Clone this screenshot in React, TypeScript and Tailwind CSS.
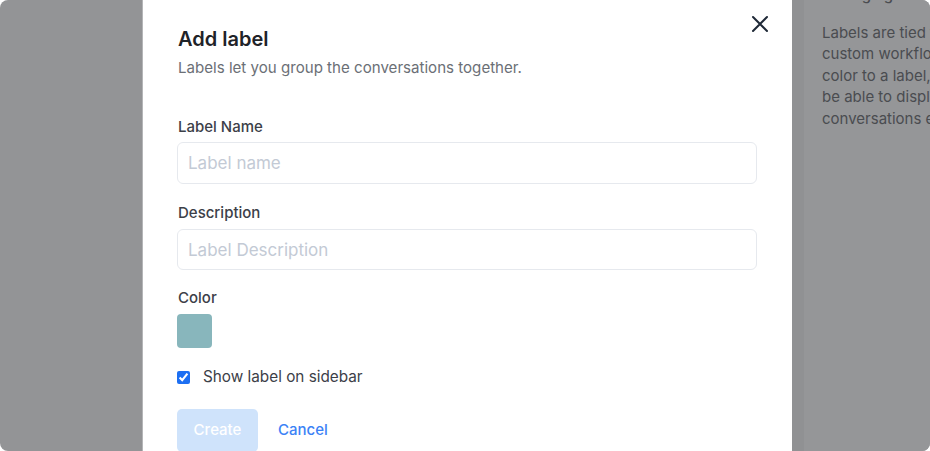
import { useState } from 'react';

const font = { fontFamily: 'Inter, "Noto Sans", sans-serif' };

const CloseIcon = () => (
  <svg width="18" height="18" viewBox="0 0 18 18" fill="none" stroke="#1f2937" strokeWidth="2" strokeLinecap="round">
    <path d="M2 2 L16 16 M16 2 L2 16" />
  </svg>
);

export default function App() {
  const [showOnSidebar, setShowOnSidebar] = useState(true);

  return (
    <div className="w-[930px] h-[451px] overflow-hidden rounded-[8px] bg-[#939496] flex" style={font}>
      {/* left side of overlay */}
      <div className="w-[143px] shrink-0 border-r border-[#b4b5b7]" />

      {/* modal */}
      <div className="w-[649px] shrink-0 bg-white pl-[34px] pr-[35px] pt-[25px] relative">
        <button className="absolute right-[23px] top-[15px]">
          <CloseIcon />
        </button>
        <h2 className="pl-px text-[20px] leading-[28px] font-semibold text-[#1f2328]">Add label</h2>
        <p className="pl-px mt-[4px] text-[15.1px] leading-[22px] text-[#6b6f76]">
          Labels let you group the conversations together.
        </p>

        <label className="pl-px block mt-[38px] text-[15px] leading-[20px] font-medium text-[#3c4048]">Label Name</label>
        <input
          placeholder="Label name"
          className="mt-[5px] w-[580px] h-[42px] rounded-[6px] border border-[#e6e9ee] px-[10px] text-[17px] text-[#1f2328] placeholder:text-[#c3cad5] outline-none"
        />

        <label className="pl-px block mt-[19px] text-[15px] leading-[20px] font-medium text-[#3c4048]">Description</label>
        <input
          placeholder="Label Description"
          className="mt-[6px] w-[580px] h-[41px] rounded-[6px] border border-[#e6e9ee] px-[10px] text-[17px] text-[#1f2328] placeholder:text-[#c3cad5] outline-none"
        />

        <label className="pl-px block mt-[18px] text-[15px] leading-[20px] font-medium text-[#3c4048]">Color</label>
        <div className="mt-[6px] w-[35px] h-[34px] rounded-[4px] bg-[#88b6bc]" />

        <label className="mt-[19px] flex items-center gap-[13px] h-[20px]">
          <input
            type="checkbox"
            checked={showOnSidebar}
            onChange={(e) => setShowOnSidebar(e.target.checked)}
            className="w-[13px] h-[13px] m-0 accent-[#1d6ff2]"
          />
          <span className="text-[15.3px] text-[#3c4048]">Show label on sidebar</span>
        </label>

        <div className="mt-[22px] flex items-center gap-[20px]">
          <button className="w-[81px] h-[43px] rounded-[5px] bg-[#cfe3fb] text-white text-[15px] font-medium">
            Create
          </button>
          <button className="text-[15px] font-medium text-[#3b82f6]">Cancel</button>
        </div>
      </div>

      {/* page behind overlay */}
      <div className="flex-1 bg-[#959698] border-l-[12px] border-[#909193] pl-[18px] overflow-hidden">
        <div className="whitespace-nowrap text-[15px] leading-[21.5px] text-[#4a4c50]">
          <p className="-mt-[16px] font-medium">Managing labels</p>
          <p className="mt-[16px]">
            Labels are tied to the workspace and can be used to create
            <br />
            custom workflows in your team. You can assign a
            <br />
            color to a label, it makes it easier to identify the label. You will
            <br />
            be able to display the label on the sidebar to filter the
            <br />
            conversations easily.
          </p>
        </div>
      </div>
    </div>
  );
}
